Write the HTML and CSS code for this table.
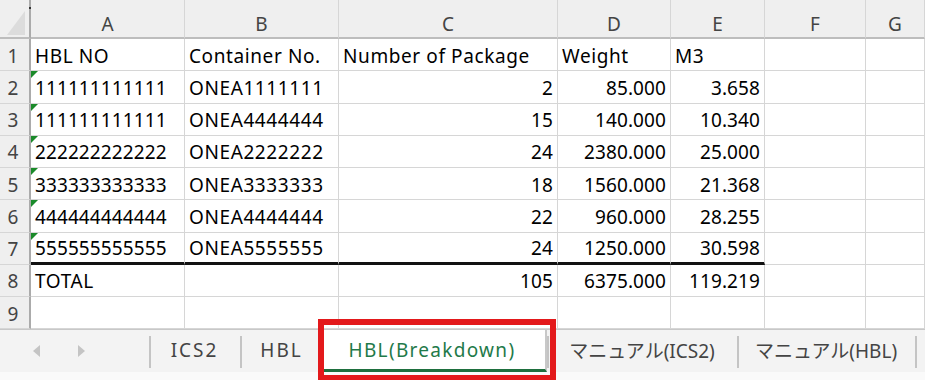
FILE: index.html
```html
<!DOCTYPE html>
<html lang="ja">
<head>
<meta charset="utf-8">
<title>HBL(Breakdown)</title>
<link rel="stylesheet" href="styles.css">
</head>
<body>
<div class="app">
  <div class="sheet">
    <div class="corner"><span class="dot"></span><svg class="corner-tri" width="20" height="26" viewBox="0 0 20 26"><polygon points="19,1 19,25 1,25" fill="#dcdcdc"/></svg></div>
    <div class="hd">A</div><div class="hd">B</div><div class="hd">C</div><div class="hd">D</div><div class="hd">E</div><div class="hd">F</div><div class="hd">G</div>

    <div class="rh">1</div>
    <div class="c t">HBL NO</div><div class="c t">Container No.</div><div class="c t">Number of Package</div><div class="c t">Weight</div><div class="c t">M3</div><div class="c"></div><div class="c"></div>

    <div class="rh">2</div>
    <div class="c tri">111111111111</div><div class="c t">ONEA1111111</div><div class="c num">2</div><div class="c num">85.000</div><div class="c num">3.658</div><div class="c"></div><div class="c"></div>

    <div class="rh">3</div>
    <div class="c tri">111111111111</div><div class="c t">ONEA4444444</div><div class="c num">15</div><div class="c num">140.000</div><div class="c num">10.340</div><div class="c"></div><div class="c"></div>

    <div class="rh">4</div>
    <div class="c tri">222222222222</div><div class="c t">ONEA2222222</div><div class="c num">24</div><div class="c num">2380.000</div><div class="c num">25.000</div><div class="c"></div><div class="c"></div>

    <div class="rh">5</div>
    <div class="c tri">333333333333</div><div class="c t">ONEA3333333</div><div class="c num">18</div><div class="c num">1560.000</div><div class="c num">21.368</div><div class="c"></div><div class="c"></div>

    <div class="rh">6</div>
    <div class="c tri">444444444444</div><div class="c t">ONEA4444444</div><div class="c num">22</div><div class="c num">960.000</div><div class="c num">28.255</div><div class="c"></div><div class="c"></div>

    <div class="rh">7</div>
    <div class="c tri thick">555555555555</div><div class="c t thick">ONEA5555555</div><div class="c num thick">24</div><div class="c num thick">1250.000</div><div class="c num thick">30.598</div><div class="c"></div><div class="c"></div>

    <div class="rh">8</div>
    <div class="c t">TOTAL</div><div class="c"></div><div class="c num">105</div><div class="c num">6375.000</div><div class="c num">119.219</div><div class="c"></div><div class="c"></div>

    <div class="rh">9</div>
    <div class="c"></div><div class="c"></div><div class="c"></div><div class="c"></div><div class="c"></div><div class="c"></div><div class="c"></div>
  </div>

  <div class="tabbar">
    <div class="nav">
      <svg width="8" height="12" viewBox="0 0 8 12"><polygon points="7,0 7,12 0,6" fill="#c4c4c4"/></svg>
      <svg width="8" height="12" viewBox="0 0 8 12"><polygon points="1,0 1,12 8,6" fill="#c4c4c4"/></svg>
    </div>
    <div class="tab sep caps">ICS2</div>
    <div class="tab sep caps">HBL</div>
    <div class="tab active">HBL(Breakdown)</div>
    <div class="tab sep w1">マニュアル(ICS2)</div>
    <div class="tab sep sep-r w2">マニュアル(HBL)</div>
    <div class="highlight"></div>
  </div>
  <div class="footer-strip"></div>
</div>
</body>
</html>
```

FILE: styles.css
```css
html, body {
  margin: 0;
  padding: 0;
  background: #ffffff;
}

.app {
  width: 925px;
  height: 380px;
  overflow: hidden;
  position: relative;
  font-family: "Noto Sans", "Noto Sans CJK JP", sans-serif;
}

.sheet {
  display: grid;
  grid-template-columns: 31px 154px 154px 219px 113px 94px 101px 59px;
  grid-template-rows: 39px repeat(9, 32.25px);
  font-size: 19px;
  border-bottom: 2px solid #c8c8c8;
  box-sizing: border-box;
  height: 330px;
}

.corner {
  position: relative;
  background: #efefef;
  border-right: 2px solid #ababab;
  border-bottom: 2px solid #bdbdbd;
}

.corner-tri {
  position: absolute;
  left: 6px;
  top: 10px;
}

.dot {
  position: absolute;
  left: 29px;
  top: 7px;
  width: 2px;
  height: 2px;
  background: #333;
}

.hd {
  background: #efefef;
  color: #444;
  border-right: 1px solid #d6d6d6;
  border-bottom: 2px solid #bdbdbd;
  display: flex;
  align-items: center;
  justify-content: center;
  padding-top: 10px;
  box-sizing: border-box;
}

.rh {
  background: #efefef;
  color: #444;
  border-right: 2px solid #ababab;
  border-bottom: 1px solid #d6d6d6;
  display: flex;
  align-items: center;
  justify-content: center;
  padding-top: 2px;
  padding-right: 3px;
  box-sizing: border-box;
}

.c {
  position: relative;
  color: #000;
  border-right: 1px solid #d6d6d6;
  border-bottom: 1px solid #d6d6d6;
  display: flex;
  align-items: center;
  padding: 2px 5px 0 4px;
  box-sizing: border-box;
  white-space: nowrap;
  overflow: hidden;
  letter-spacing: 0.1px;
}

.t {
  letter-spacing: 0.6px;
}

.num {
  justify-content: flex-end;
  padding-right: 4px;
}

.thick {
  border-bottom: 3px solid #111;
}

.tri::before {
  content: "";
  position: absolute;
  left: 0;
  top: 0;
  border-top: 7px solid #1a8a2a;
  border-right: 7px solid transparent;
}

.tabbar {
  display: flex;
  align-items: stretch;
  height: 42px;
  background: #f3f3f3;
  color: #444;
  font-size: 19px;
}

.nav {
  width: 149px;
  display: flex;
  align-items: center;
  padding-left: 33px;
  gap: 36px;
  box-sizing: border-box;
}

.tab {
  display: flex;
  align-items: center;
  justify-content: center;
  padding-bottom: 2px;
  box-sizing: border-box;
  position: relative;
}

.tab:nth-child(2) { width: 91px; }
.tab:nth-child(3) { width: 83px; }

.caps {
  letter-spacing: 2px;
}

.sep::before {
  content: "";
  position: absolute;
  left: 0;
  top: 6px;
  bottom: 4px;
  width: 2px;
  background: #c4c4c4;
}

.sep-r::after {
  content: "";
  position: absolute;
  right: -2px;
  top: 6px;
  bottom: 4px;
  width: 2px;
  background: #c4c4c4;
}

.active {
  width: 224px;
  background: #ffffff;
  color: #1f7a4a;
  border-bottom: 3px solid #1e6f3e;
  border-right: 2px solid #c8c8c8;
  padding-bottom: 0;
  padding-right: 4px;
  letter-spacing: 1.3px;
}

.w1 { width: 190px; }
.w2 { width: 178px; }

.highlight {
  position: absolute;
  left: 318px;
  top: 319px;
  width: 238px;
  height: 62px;
  border: 6px solid #e3191b;
  box-sizing: border-box;
}

.footer-strip {
  height: 8px;
  background: #fafafa;
}
```
